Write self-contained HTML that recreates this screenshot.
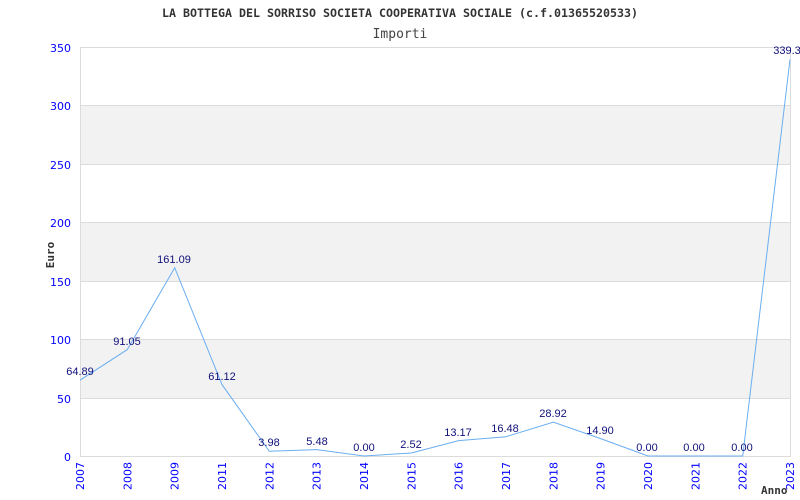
<!DOCTYPE html>
<html><head><style>body{margin:0;background:#fff}</style></head><body>
<svg width="800" height="500" xmlns="http://www.w3.org/2000/svg" style="display:block">
<rect width="800" height="500" fill="#fff"/>
<g fill="#f2f2f2"><rect x="80" y="105" width="710" height="59"/><rect x="80" y="222" width="710" height="59"/><rect x="80" y="339" width="710" height="59"/></g>
<g stroke="#dcdcdc" stroke-width="1">
<line x1="80" y1="47.5" x2="790" y2="47.5"/><line x1="80" y1="105.5" x2="790" y2="105.5"/><line x1="80" y1="164.5" x2="790" y2="164.5"/><line x1="80" y1="222.5" x2="790" y2="222.5"/><line x1="80" y1="281.5" x2="790" y2="281.5"/><line x1="80" y1="339.5" x2="790" y2="339.5"/><line x1="80" y1="398.5" x2="790" y2="398.5"/><line x1="80" y1="456.5" x2="790" y2="456.5"/>
<line x1="80.5" y1="47" x2="80.5" y2="457"/><line x1="790.5" y1="47" x2="790.5" y2="457"/>
</g>
<text x="162" y="17" textLength="476" lengthAdjust="spacingAndGlyphs" font-family="DejaVu Sans Mono, monospace" font-weight="bold" font-size="11.5" fill="#333">LA BOTTEGA DEL SORRISO SOCIETA COOPERATIVA SOCIALE (c.f.01365520533)</text>
<text x="400" y="38" text-anchor="middle" font-family="DejaVu Sans Mono, monospace" font-size="13" fill="#444">Importi</text>
<g font-family="DejaVu Sans, sans-serif" font-size="11" fill="#0000ff" text-anchor="end">
<text x="71" y="52">350</text><text x="71" y="110">300</text><text x="71" y="169">250</text><text x="71" y="227">200</text><text x="71" y="286">150</text><text x="71" y="344">100</text><text x="71" y="403">50</text><text x="71" y="461">0</text>
</g>
<text transform="translate(54,255) rotate(-90)" text-anchor="middle" font-family="DejaVu Sans Mono, monospace" font-weight="bold" font-size="11" fill="#333">Euro</text>
<text x="761" y="494" font-family="DejaVu Sans Mono, monospace" font-weight="bold" font-size="11" fill="#333">Anno</text>
<g font-family="DejaVu Sans, sans-serif" font-size="11" fill="#0000ff" text-anchor="end">
<text transform="translate(84,462) rotate(-90)">2007</text>
<text transform="translate(131.3,462) rotate(-90)">2008</text>
<text transform="translate(178.7,462) rotate(-90)">2009</text>
<text transform="translate(226,462) rotate(-90)">2011</text>
<text transform="translate(273.3,462) rotate(-90)">2012</text>
<text transform="translate(320.7,462) rotate(-90)">2013</text>
<text transform="translate(368,462) rotate(-90)">2014</text>
<text transform="translate(415.3,462) rotate(-90)">2015</text>
<text transform="translate(462.7,462) rotate(-90)">2016</text>
<text transform="translate(510,462) rotate(-90)">2017</text>
<text transform="translate(557.3,462) rotate(-90)">2018</text>
<text transform="translate(604.7,462) rotate(-90)">2019</text>
<text transform="translate(652,462) rotate(-90)">2020</text>
<text transform="translate(699.3,462) rotate(-90)">2021</text>
<text transform="translate(746.7,462) rotate(-90)">2022</text>
<text transform="translate(794,462) rotate(-90)">2023</text>
</g>
<polyline fill="none" stroke="#6aaef0" stroke-width="1" points="80,380.2 127.3,349.6 174.7,267.7 222,384.6 269.3,451.3 316.7,449.6 364,456 411.3,453 458.7,440.6 506,436.7 553.3,422.2 600.7,438.6 648,456 695.3,456 742.7,456 790,59.5"/>
<g font-family="Liberation Sans, sans-serif" font-size="11" fill="#10107a" text-anchor="middle">
<text x="80" y="375">64.89</text>
<text x="127" y="345">91.05</text>
<text x="174" y="263">161.09</text>
<text x="222" y="380">61.12</text>
<text x="269" y="446">3.98</text>
<text x="317" y="445">5.48</text>
<text x="364" y="451">0.00</text>
<text x="411" y="448">2.52</text>
<text x="458" y="436">13.17</text>
<text x="505" y="432">16.48</text>
<text x="553" y="417">28.92</text>
<text x="600" y="434">14.90</text>
<text x="647" y="451">0.00</text>
<text x="694" y="451">0.00</text>
<text x="742" y="451">0.00</text>
<text x="787" y="54">339.3</text>
</g>
</svg>
</body></html>
